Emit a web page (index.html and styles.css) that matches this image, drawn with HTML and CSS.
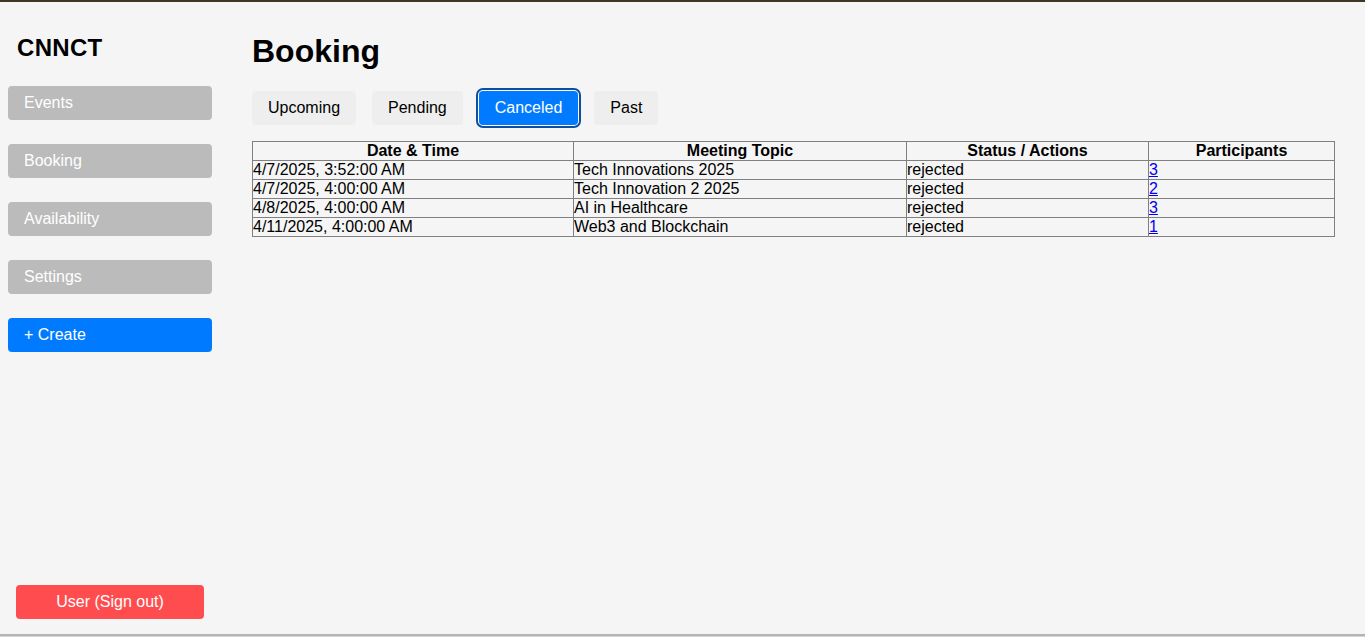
FILE: index.html
```
<!DOCTYPE html>
<html lang="en">
<head>
<meta charset="utf-8">
<title>CNNCT - Booking</title>
<link rel="stylesheet" href="styles.css">
</head>
<body>
<div class="app">
  <aside class="sidebar">
    <h2 class="logo">CNNCT</h2>
    <nav class="nav">
      <button class="nav-btn">Events</button>
      <button class="nav-btn">Booking</button>
      <button class="nav-btn">Availability</button>
      <button class="nav-btn">Settings</button>
      <button class="nav-btn create">+ Create</button>
    </nav>
    <button class="signout">User (Sign out)</button>
  </aside>
  <main class="main">
    <h1 class="title">Booking</h1>
    <div class="tabs">
      <button class="tab">Upcoming</button>
      <button class="tab">Pending</button>
      <button class="tab active">Canceled</button>
      <button class="tab">Past</button>
    </div>
    <table class="table">
      <thead>
        <tr>
          <th class="c1">Date &amp; Time</th>
          <th class="c2">Meeting Topic</th>
          <th class="c3">Status / Actions</th>
          <th class="c4">Participants</th>
        </tr>
      </thead>
      <tbody>
        <tr><td>4/7/2025, 3:52:00 AM</td><td>Tech Innovations 2025</td><td>rejected</td><td><a href="#">3</a></td></tr>
        <tr><td>4/7/2025, 4:00:00 AM</td><td>Tech Innovation 2 2025</td><td>rejected</td><td><a href="#">2</a></td></tr>
        <tr><td>4/8/2025, 4:00:00 AM</td><td>AI in Healthcare</td><td>rejected</td><td><a href="#">3</a></td></tr>
        <tr><td>4/11/2025, 4:00:00 AM</td><td>Web3 and Blockchain</td><td>rejected</td><td><a href="#">1</a></td></tr>
      </tbody>
    </table>
  </main>
</div>
</body>
</html>
```
FILE: styles.css
```
* { box-sizing: border-box; }
html { background: #d4d4d4; }
body {
  margin: 0;
  font-family: "Liberation Sans", Arial, sans-serif;
  color: #000;
  background: #d4d4d4;
}
.app {
  height: 636px;
  display: flex;
  background: #f5f5f5;
  border-top: 2px solid #3d3826;
  border-bottom: 2px solid #b4b4b4;
}
.sidebar {
  width: 220px;
  flex: none;
  display: flex;
  flex-direction: column;
}
.logo {
  margin: 32px 0 24px;
  padding-left: 17px;
  font-size: 24px;
  font-weight: bold;
  letter-spacing: 0.3px;
}
.nav {
  display: flex;
  flex-direction: column;
  gap: 24px;
  padding: 0 8px;
}
.nav-btn {
  height: 34px;
  border: none;
  border-radius: 4px;
  background: #bbbbbb;
  color: #fff;
  font: 16px/18px "Liberation Sans", Arial, sans-serif;
  text-align: left;
  padding: 0 16px;
}
.nav-btn.create { background: #007bff; }
.signout {
  margin: auto 16px 15px;
  height: 34px;
  border: none;
  border-radius: 4px;
  background: #ff4d4f;
  color: #fff;
  font: 16px/18px "Liberation Sans", Arial, sans-serif;
}
.main {
  flex: 1;
  padding: 0 32px 0 32px;
}
.title {
  margin: 31px 0 21px;
  font-size: 32px;
  font-weight: bold;
}
.tabs {
  display: flex;
  gap: 16px;
  margin-bottom: 16px;
}
.tab {
  height: 34px;
  padding: 0 16px;
  border: none;
  border-radius: 4px;
  background: #eeeeee;
  color: #000;
  font: 16px/18px "Liberation Sans", Arial, sans-serif;
}
.tab.active {
  background: #007bff;
  color: #fff;
  outline: 2px solid #0d4f9e;
  outline-offset: 1px;
  box-shadow: 0 0 0 1px #ffffff;
}
.table {
  width: 100%;
  border-collapse: collapse;
  table-layout: fixed;
  font-size: 16px;
  line-height: 18px;
}
.table th, .table td {
  border: 1px solid #808080;
  padding: 0;
  white-space: nowrap;
}
.table th { text-align: center; font-weight: bold; }
.table td { text-align: left; }
.c1 { width: 321px; }
.c2 { width: 333px; }
.c3 { width: 242px; }
.c4 { width: 186px; }
.table a { color: #0000ee; }
```
